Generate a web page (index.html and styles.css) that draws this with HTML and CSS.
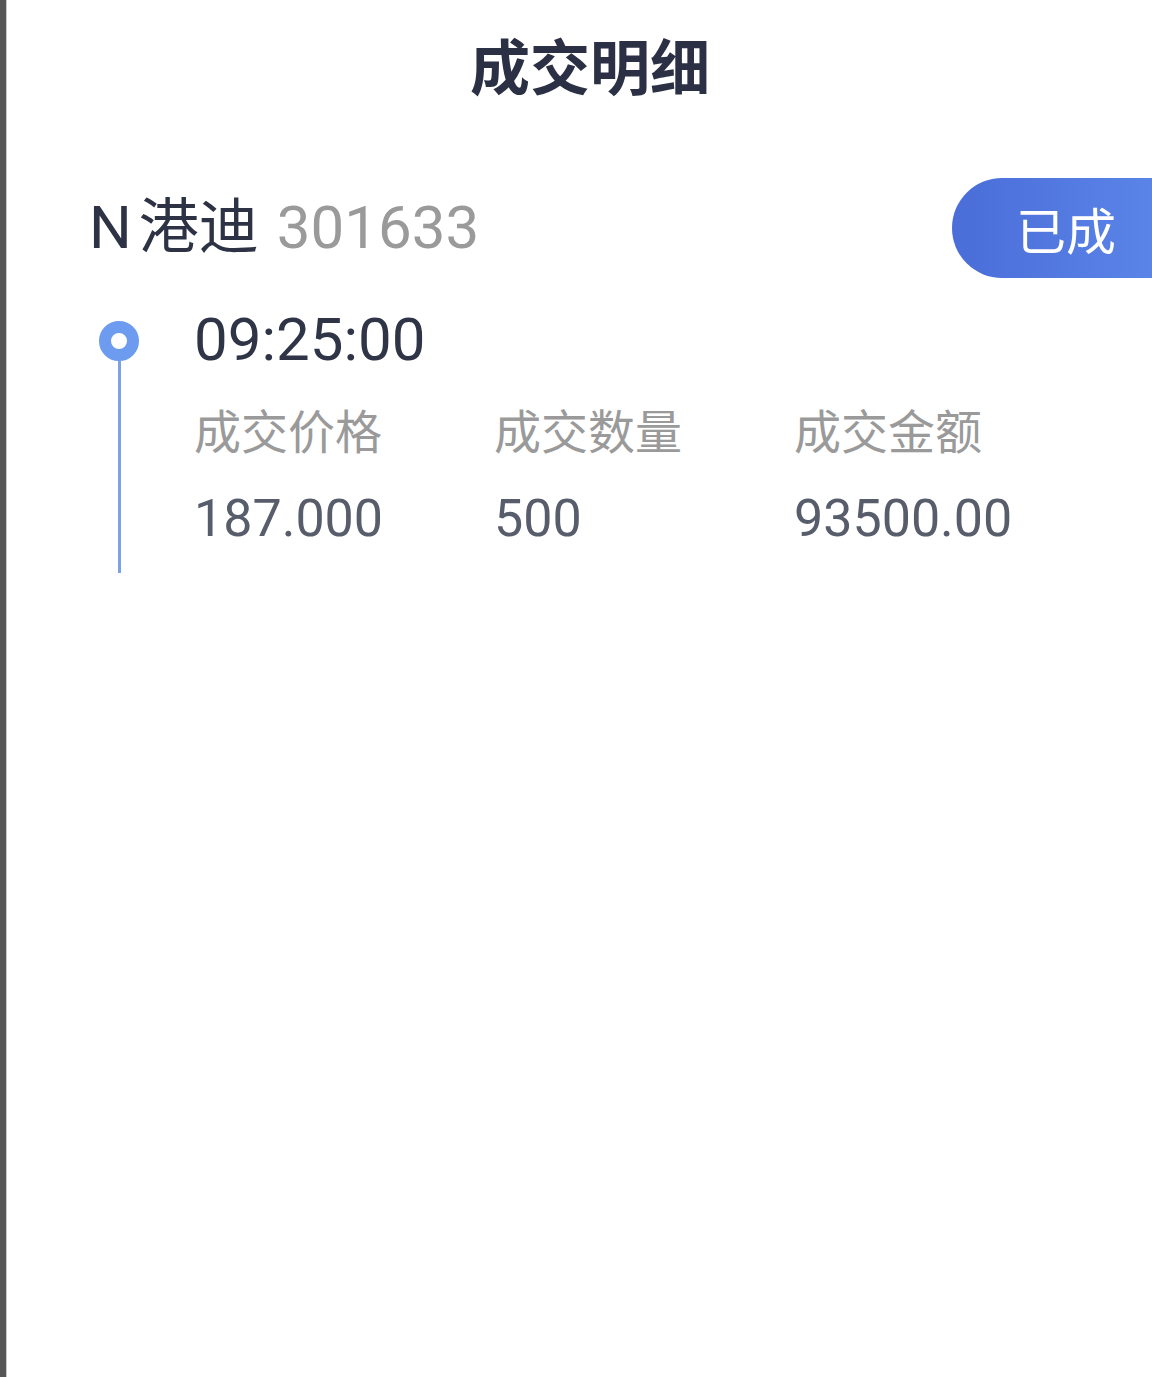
FILE: index.html
```html
<!DOCTYPE html>
<html lang="zh-CN">
<head>
    <meta charset="UTF-8">
    <meta name="viewport" content="width=device-width, initial-scale=1.0">
    <title>成交明细</title>
    <link rel="stylesheet" href="styles.css">
</head>
<body>
    <div class="page">
        <header class="header">
            <h1>成交明细</h1>
        </header>

        <div class="stock-row">
            <div class="stock">
                <span class="stock-name"><span class="prefix">N</span>港迪</span>
                <span class="stock-code">301633</span>
            </div>
            <div class="badge">已成</div>
        </div>

        <div class="timeline">
            <div class="rail">
                <span class="dot"></span>
                <span class="line"></span>
            </div>
            <div class="entry">
                <div class="time">09:25:00</div>
                <div class="fields">
                    <div class="label">成交价格</div>
                    <div class="label">成交数量</div>
                    <div class="label">成交金额</div>
                    <div class="value">187.000</div>
                    <div class="value">500</div>
                    <div class="value">93500.00</div>
                </div>
            </div>
        </div>
    </div>
</body>
</html>
```

FILE: styles.css
```css
html, body {
    margin: 0;
    padding: 0;
    background: #ffffff;
}
body {
    font-family: Roboto, "Noto Sans CJK SC", sans-serif;
}
.page {
    min-height: 1377px;
    box-sizing: border-box;
    border-left: 6px solid #565656;
    box-shadow: inset 1px 0 0 #c9c9c9;
    overflow: hidden;
}
.header {
    height: 128px;
    padding-bottom: 12px;
    display: flex;
    align-items: center;
    justify-content: center;
    padding-left: 22px;
}
.header h1 {
    margin: 0;
    font-size: 60px;
    line-height: 1;
    font-weight: 700;
    color: #2b3044;
    font-family: "Noto Sans CJK SC", sans-serif;
}
.stock-row {
    margin-top: 38px;
    height: 100px;
    display: flex;
    align-items: center;
    justify-content: space-between;
}
.stock {
    padding-left: 83px;
    display: flex;
    align-items: center;
    gap: 18px;
    font-size: 60px;
    line-height: 1;
}
.stock-name {
    color: #2d3245;
}
.prefix {
    margin-right: 7px;
}
.stock-code {
    color: #9a9a9a;
}
.badge {
    width: 200px;
    height: 100px;
    box-sizing: border-box;
    padding-left: 64px;
    display: flex;
    align-items: center;
    border-radius: 50px 0 0 50px;
    background: linear-gradient(90deg, #4a6dd8, #5a84e8);
    color: #ffffff;
    font-size: 50px;
    font-family: "Noto Sans CJK SC", sans-serif;
}
.timeline {
    margin-top: 32px;
    display: flex;
}
.rail {
    width: 188px;
    padding-top: 11px;
    display: flex;
    flex-direction: column;
    align-items: flex-start;
}
.dot {
    margin-left: 93px;
    width: 40px;
    height: 40px;
    box-sizing: border-box;
    border-radius: 50%;
    border: 12px solid #6d9bf0;
    background: #ffffff;
}
.line {
    margin-left: 112px;
    width: 3px;
    flex: 1;
    background: #7da2e2;
}
.entry {
    padding-bottom: 24px;
}
.time {
    height: 60px;
    line-height: 60px;
    font-size: 60px;
    color: #2f3447;
}
.fields {
    margin-top: 29px;
    display: grid;
    grid-template-columns: 300px 300px 300px;
    row-gap: 30px;
}
.label {
    height: 60px;
    line-height: 60px;
    font-size: 47px;
    color: #9a9a9a;
    font-family: "Noto Sans CJK SC", sans-serif;
}
.value {
    height: 60px;
    line-height: 60px;
    font-size: 52px;
    color: #585d6c;
}
```
